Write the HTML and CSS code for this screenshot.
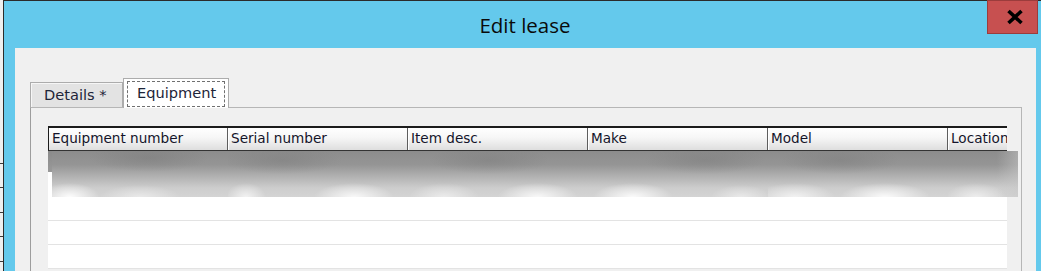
FILE: index.html
```html
<!DOCTYPE html>
<html>
<head>
<meta charset="utf-8">
<link rel="stylesheet" href="styles.css">
</head>
<body>
<div class="desk">
  <div class="window">
    <div class="titlebar">
      <span class="title">Edit lease</span>
      <div class="close">
        <svg width="18" height="16" viewBox="0 0 18 16"><path d="M2.5 2 L15.5 14 M15.5 2 L2.5 14" stroke="#000" stroke-width="3.6" stroke-linecap="butt"/></svg>
      </div>
    </div>
    <div class="client">
      <div class="tabstrip">
        <div class="tab">Details *</div>
        <div class="tab active"><span class="focus">Equipment</span></div>
      </div>
      <div class="panel">
        <div class="grid">
          <div class="ghead">
            <div class="hc">Equipment number</div>
            <div class="hc">Serial number</div>
            <div class="hc">Item desc.</div>
            <div class="hc">Make</div>
            <div class="hc">Model</div>
            <div class="hc">Location</div>
          </div>
          <div class="brow">
            <div class="bmark"></div>
            <div class="bc b1"></div>
            <div class="bc b2"></div>
            <div class="bc b3"></div>
            <div class="bc b4"></div>
            <div class="bc b5"></div>
            <div class="bc b6"></div>
          </div>
          <div class="erow"></div>
          <div class="erow"></div>
          <div class="erow"></div>
        </div>
      </div>
    </div>
  </div>
</div>
</body>
</html>
```
FILE: styles.css
```css
html, body {
  margin: 0;
  padding: 0;
  height: 271px;
  overflow: hidden;
}
body {
  background: #ededed;
  font-family: "DejaVu Sans", sans-serif;
}
.desk {
  display: flex;
  height: 271px;
  padding-left: 3px;
  box-sizing: border-box;
  background:
    repeating-linear-gradient(to bottom, transparent 0, transparent 23px, #3a3a3a 23px, #3a3a3a 24px, transparent 24px, transparent 24.5px) 0 140px / 3px 140px no-repeat,
    #efefef;
}
.window {
  flex: 1;
  display: flex;
  flex-direction: column;
  position: relative;
  background: #64c9ec;
  border-top: 1px solid #2b2b2b;
  border-left: 1px solid #2b2b2b;
  padding: 0 5px 0 11px;
}
.titlebar {
  height: 47px;
  margin: 0 -5px 0 -11px;
  padding-left: 5px;
  display: flex;
  align-items: center;
  justify-content: center;
}
.title {
  font-family: "Open Sans", sans-serif;
  font-size: 20.5px;
  color: #0a0a0a;
  padding-top: 1px;
}
.close {
  position: absolute;
  top: -1px;
  right: 3px;
  width: 51px;
  height: 34px;
  box-sizing: border-box;
  background: #c75050;
  border: 1px solid #9b3c3c;
  display: flex;
  align-items: center;
  justify-content: center;
}
.close svg {
  display: block;
  margin-left: 4px;
}
.client {
  flex: 1;
  display: flex;
  flex-direction: column;
  background: #f0f0f0;
  padding: 30px 14px 0 15px;
}
.tabstrip {
  display: flex;
  align-items: flex-end;
  height: 30px;
  margin-bottom: -1px;
  position: relative;
  z-index: 1;
}
.tab {
  box-sizing: border-box;
  width: 93px;
  height: 25px;
  margin-bottom: 1px;
  padding-left: 13px;
  background: #e3e3e3;
  border: 1px solid #acacac;
  border-bottom: none;
  box-shadow: inset 1px 1px 0 #f6f6f6;
  font-size: 14.6px;
  line-height: 24px;
  color: #1d2438;
}
.tab.active {
  width: 106px;
  height: 30px;
  margin-bottom: 0;
  padding: 2px 3px 0 3px;
  background: #ffffff;
  box-shadow: none;
}
.focus {
  display: block;
  height: 26px;
  box-sizing: border-box;
  border: 1px dashed #707070;
  padding-left: 9px;
  line-height: 21px;
}
.panel {
  flex: 1;
  background: #f0f0f0;
  border: 1px solid #b6b6b6;
  border-left-color: #9d9d9d;
  border-bottom: none;
  padding: 18px 0 0 17px;
}
.grid {
  width: 959px;
}
.ghead {
  display: flex;
  height: 22px;
  overflow: hidden;
  border-top: 2px solid #1c1c1c;
  border-left: 1px solid #1c1c1c;
  border-bottom: 1px solid #333333;
}
.hc {
  flex: 0 0 180px;
  box-sizing: border-box;
  padding-left: 3px;
  border-right: 1px solid #5e5e5e;
  box-shadow: inset 1px 0 0 #ffffff;
  background: linear-gradient(to bottom, #ffffff 0%, #f6f6f6 45%, #dedede 100%);
  font-size: 13.6px;
  line-height: 21px;
  color: #14142a;
  white-space: nowrap;
  overflow: hidden;
}
.hc:first-child {
  flex-basis: 179px;
  box-shadow: none;
}
.brow {
  display: flex;
  width: 970px;
  height: 46px;
  background: linear-gradient(to bottom, #8c8c8c 0%, #959595 30%, #b4b4b4 58%, #cdcdcd 80%, #d4d4d4 100%);
}
.bmark {
  flex: 0 0 4px;
  background: linear-gradient(to bottom, #8a8a8a 0, #999999 21px, #ffffff 21px);
}
.bc {
  flex: 0 0 180px;
}
.bc.b1 {
  flex-basis: 176px;
  background:
    radial-gradient(ellipse 30px 14px at 10% 100%, rgba(255,255,255,0.95), rgba(255,255,255,0)),
    radial-gradient(ellipse 40px 12px at 50% 100%, rgba(255,255,255,0.5), rgba(255,255,255,0)),
    radial-gradient(ellipse 60px 14px at 55% 15%, rgba(120,120,120,0.45), rgba(120,120,120,0));
}
.bc.b2 {
  background:
    radial-gradient(ellipse 20px 14px at 10% 100%, rgba(255,255,255,0.7), rgba(255,255,255,0)),
    radial-gradient(ellipse 40px 14px at 70% 100%, rgba(255,255,255,0.85), rgba(255,255,255,0)),
    radial-gradient(ellipse 60px 14px at 30% 20%, rgba(120,120,120,0.4), rgba(120,120,120,0));
}
.bc.b3 {
  background:
    radial-gradient(ellipse 35px 14px at 20% 100%, rgba(255,255,255,0.55), rgba(255,255,255,0)),
    radial-gradient(ellipse 40px 14px at 72% 100%, rgba(255,255,255,0.85), rgba(255,255,255,0)),
    radial-gradient(ellipse 60px 14px at 45% 20%, rgba(120,120,120,0.4), rgba(120,120,120,0));
}
.bc.b4 {
  background:
    radial-gradient(ellipse 40px 14px at 25% 100%, rgba(255,255,255,0.9), rgba(255,255,255,0)),
    radial-gradient(ellipse 30px 12px at 85% 100%, rgba(255,255,255,0.5), rgba(255,255,255,0)),
    radial-gradient(ellipse 60px 14px at 65% 20%, rgba(120,120,120,0.4), rgba(120,120,120,0));
}
.bc.b5 {
  background:
    radial-gradient(ellipse 40px 14px at 15% 100%, rgba(255,255,255,0.7), rgba(255,255,255,0)),
    radial-gradient(ellipse 45px 14px at 65% 100%, rgba(255,255,255,0.9), rgba(255,255,255,0)),
    radial-gradient(ellipse 60px 14px at 40% 20%, rgba(120,120,120,0.4), rgba(120,120,120,0));
}
.bc.b6 {
  flex: 1;
  background:
    radial-gradient(ellipse 30px 14px at 40% 100%, rgba(255,255,255,0.6), rgba(255,255,255,0)),
    linear-gradient(to right, rgba(160,160,160,0) 70%, rgba(200,200,200,0.5) 100%);
}
.erow {
  height: 23px;
  background: #ffffff;
  border-bottom: 1px solid #e3e3e3;
}
```
